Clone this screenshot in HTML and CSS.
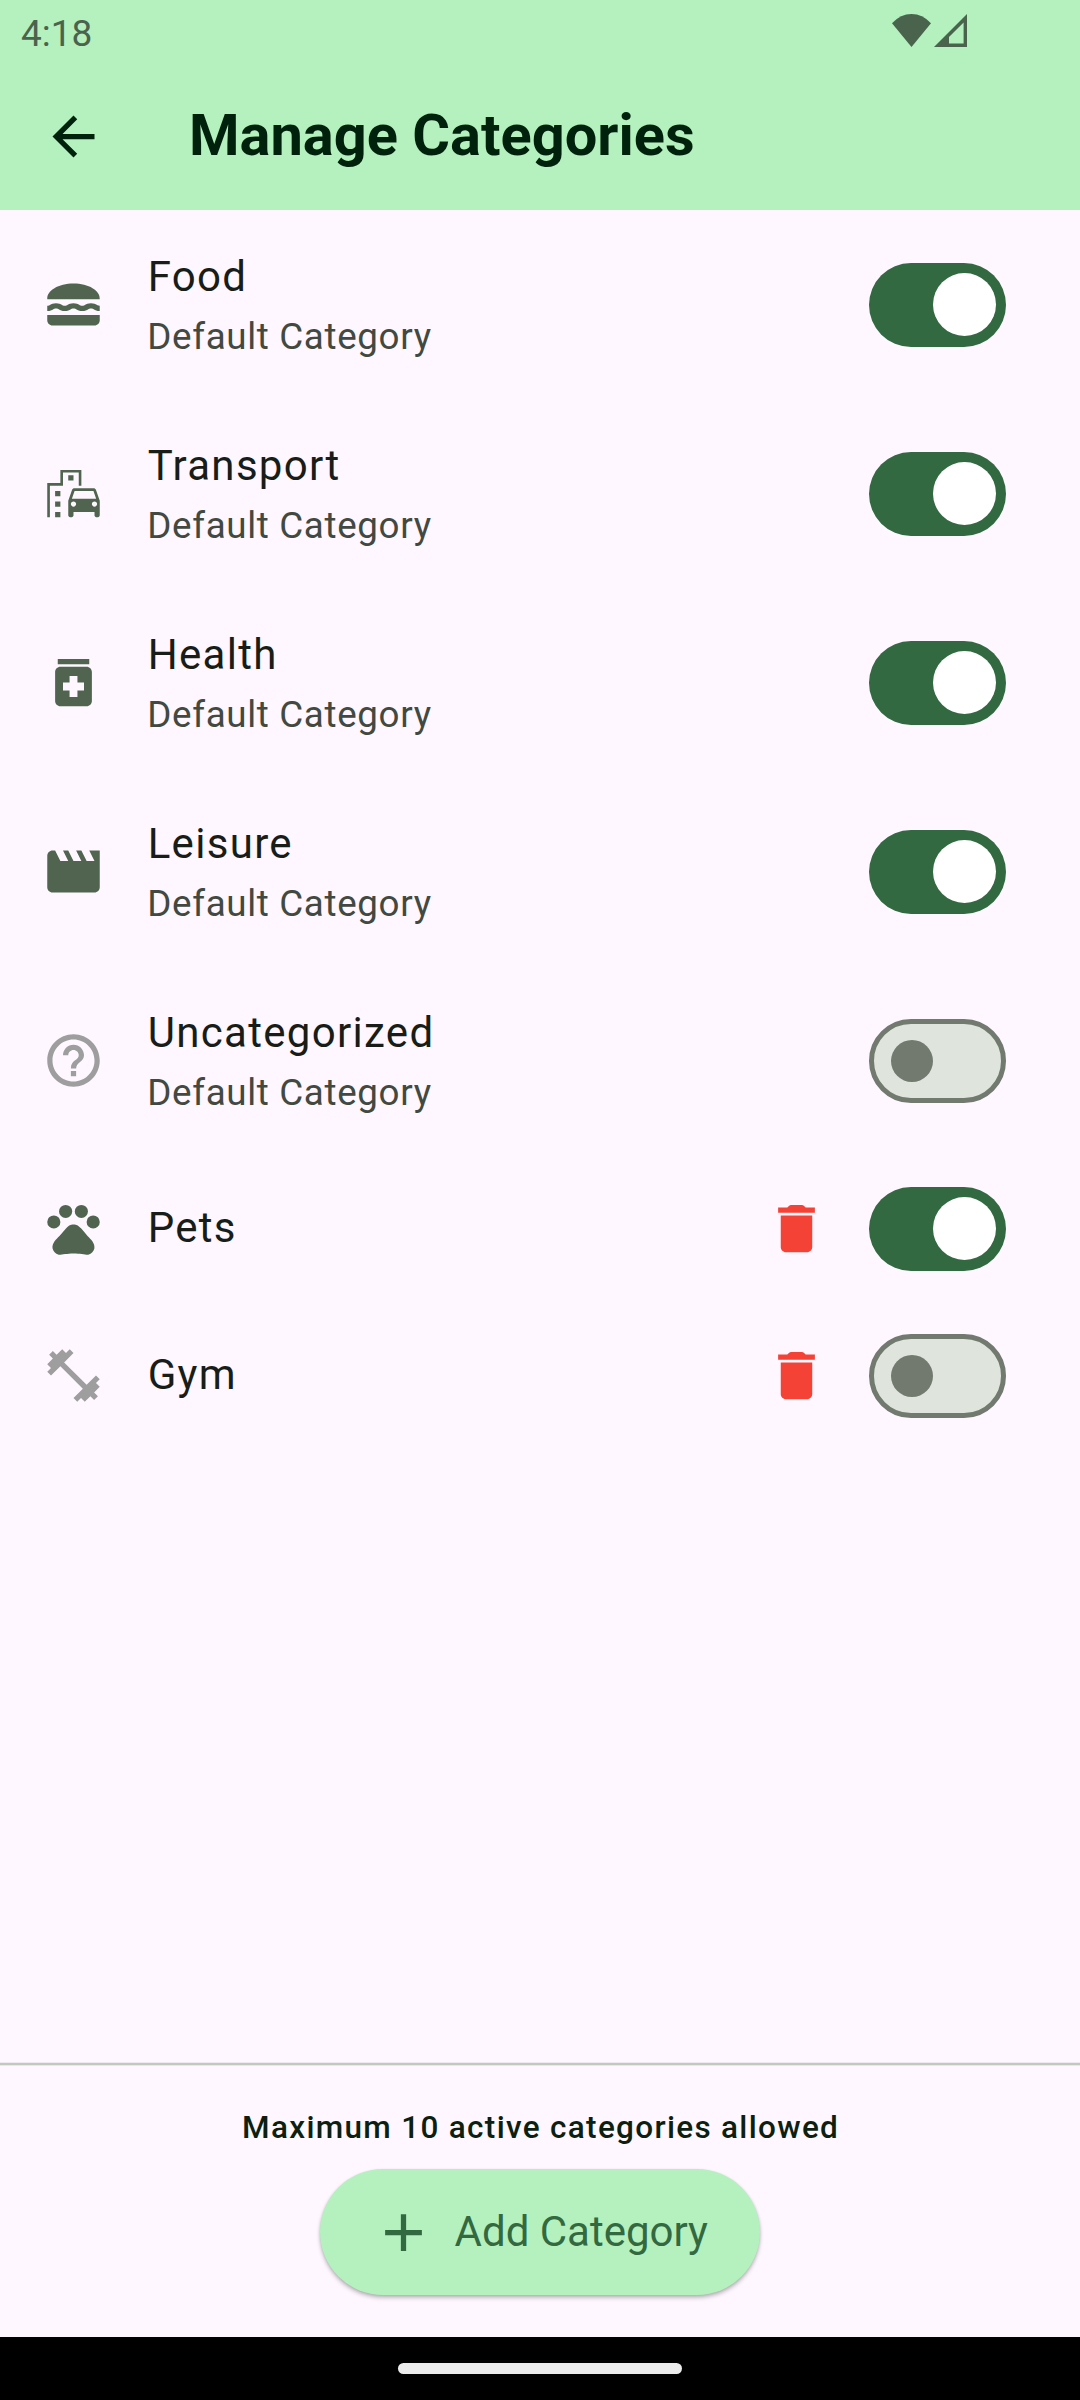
FILE: index.html
```html
<!DOCTYPE html>
<html lang="en">
<head>
<meta charset="utf-8">
<title>Manage Categories</title>
<link rel="stylesheet" href="styles.css">
</head>
<body>
<div class="screen">
  <header class="top">
    <div class="status">
      <span class="clock">4:18</span>
      <svg class="wifi" viewBox="0 0 39 33"><path d="M19.5 33L0 9.300Q8.500 0 19.500 0T39 9.300Z"/></svg>
      <svg class="signal" viewBox="0 0 33 33"><path fill-rule="evenodd" d="M33 0V33H0ZM29.600 8.500L15 23V29.600H29.600Z"/></svg>
    </div>
    <div class="appbar">
      <svg class="icon back" viewBox="0 0 24 24"><path d="M20 11H7.830l5.590-5.590L12 4l-8 8 8 8 1.410-1.410L7.830 13H20v-2z"/></svg>
      <h1 class="title">Manage Categories</h1>
    </div>
  </header>

  <main class="list">
    <div class="row">
      <svg class="icon" viewBox="0 0 24 24"><path d="M22 10c.32-3.280-4.280-6-9.990-6C6.300 4 1.700 6.720 2.020 10H22zM5.350 13.500c.55 0 .78.14 1.150.36.45.27 1.070.64 2.180.64s1.730-.37 2.180-.64c.37-.23.59-.36 1.150-.36.55 0 .78.14 1.150.36.45.27 1.070.64 2.180.64s1.730-.37 2.180-.64c.37-.23.59-.36 1.150-.36.55 0 .78.14 1.150.36.45.27 1.070.63 2.170.64v-1.980s-.79-.16-1.160-.38c-.45-.27-1.070-.64-2.180-.64s-1.730.37-2.180.64c-.37.23-.6.36-1.150.36s-.78-.14-1.150-.36c-.45-.27-1.070-.64-2.180-.64s-1.730.37-2.180.64c-.37.23-.59.36-1.150.36-.55 0-.78-.14-1.150-.36-.45-.27-1.070-.64-2.180-.64s-1.730.37-2.180.64c-.37.23-.59.36-1.150.36v2c1.110 0 1.730-.37 2.210-.64.36-.22.59-.36 1.140-.36zM2 16v2c0 1.100.9 2 2 2h16c1.100 0 2-.9 2-2v-2H2z"/></svg>
      <div class="label"><div class="name">Food</div><div class="sub">Default Category</div></div>
      <div class="switch on"><span class="thumb"></span></div>
    </div>
    <div class="row">
      <svg class="icon" viewBox="0 0 24 24"><path d="M20.570 10.660c-.14-.4-.52-.66-.97-.66h-7.190c-.46 0-.83.26-.98.66L10 14.770l.01 5.510c0 .38.31.72.69.72h.62c.38 0 .68-.38.68-.76V19h8v1.240c0 .38.31.76.69.76h.61c.38 0 .69-.34.69-.72l.01-1.370v-4.140l-1.430-4.110zm-8.160.34h7.190l1.030 3h-9.250l1.030-3zM12 17c-.55 0-1-.45-1-1s.45-1 1-1 1 .45 1 1-.45 1-1 1zm8 0c-.55 0-1-.45-1-1s.45-1 1-1 1 .45 1 1-.45 1-1 1z"/><path d="M14 9h1V3H7v5H2v13h1V9h5V4h6zM5 11h2v2H5zM10 5h2v2h-2zM5 15h2v2H5zM5 19h2v2H5z"/></svg>
      <div class="label"><div class="name">Transport</div><div class="sub">Default Category</div></div>
      <div class="switch on"><span class="thumb"></span></div>
    </div>
    <div class="row">
      <svg class="icon" viewBox="0 0 24 24"><path d="M6 3h12v2H6zM17 6H7c-1.100 0-2 .9-2 2v11c0 1.100.9 2 2 2h10c1.100 0 2-.9 2-2V8c0-1.100-.9-2-2-2zm-1 9h-2.500v2.500h-3V15H8v-3h2.500V9.500h3V12H16v3z"/></svg>
      <div class="label"><div class="name">Health</div><div class="sub">Default Category</div></div>
      <div class="switch on"><span class="thumb"></span></div>
    </div>
    <div class="row">
      <svg class="icon" viewBox="0 0 24 24"><path d="M18 4l2 4h-3l-2-4h-2l2 4h-3l-2-4H8l2 4H7L5 4H4c-1.100 0-1.990.9-1.990 2L2 18c0 1.100.9 2 2 2h16c1.100 0 2-.9 2-2V4h-4z"/></svg>
      <div class="label"><div class="name">Leisure</div><div class="sub">Default Category</div></div>
      <div class="switch on"><span class="thumb"></span></div>
    </div>
    <div class="row">
      <svg class="icon muted" viewBox="0 0 24 24"><path d="M11 18h2v-2h-2v2zm1-16C6.480 2 2 6.480 2 12s4.480 10 10 10 10-4.480 10-10S17.520 2 12 2zm0 18c-4.410 0-8-3.590-8-8s3.590-8 8-8 8 3.590 8 8-3.590 8-8 8zm0-14c-2.210 0-4 1.790-4 4h2c0-1.100.9-2 2-2s2 .9 2 2c0 2-3 1.750-3 5h2c0-2.250 3-2.500 3-5 0-2.210-1.790-4-4-4z"/></svg>
      <div class="label"><div class="name">Uncategorized</div><div class="sub">Default Category</div></div>
      <div class="switch"><span class="thumb"></span></div>
    </div>
    <div class="row short">
      <svg class="icon" viewBox="0 0 24 24"><circle cx="4.500" cy="9.500" r="2.500"/><circle cx="9" cy="5.500" r="2.500"/><circle cx="15" cy="5.500" r="2.500"/><circle cx="19.500" cy="9.500" r="2.500"/><path d="M17.340 14.860c-.87-1.020-1.600-1.890-2.480-2.910-.46-.54-1.050-1.080-1.750-1.320-.11-.04-.22-.07-.33-.09-.25-.04-.52-.04-.78-.04s-.53 0-.79.05c-.11.02-.22.05-.33.09-.7.24-1.280.78-1.750 1.320-.87 1.020-1.600 1.890-2.480 2.910-1.310 1.310-2.920 2.760-2.620 4.790.29 1.020 1.020 2.030 2.330 2.320.73.15 3.060-.44 5.540-.44h.18c2.480 0 4.810.58 5.540.44 1.310-.29 2.040-1.310 2.330-2.320.31-2.040-1.300-3.490-2.610-4.800z"/></svg>
      <div class="label"><div class="name">Pets</div></div>
      <svg class="icon delete" viewBox="0 0 24 24"><path d="M6 19c0 1.100.9 2 2 2h8c1.100 0 2-.9 2-2V7H6v12zM19 4h-3.500l-.71-.71c-.18-.18-.44-.29-.7-.29H9.910c-.26 0-.52.11-.7.29L8.500 4H5v2h14V4z"/></svg>
      <div class="switch on"><span class="thumb"></span></div>
    </div>
    <div class="row short">
      <svg class="icon muted" viewBox="0 0 24 24"><path d="M20.570 14.860L22 13.430 20.570 12 17 15.570 8.430 7 12 3.430 10.570 2 9.140 3.430 7.710 2 5.570 4.140 4.140 2.710 2.710 4.140l1.430 1.430L2 7.710l1.430 1.430L2 10.570 3.430 12 7 8.430 15.570 17 12 20.570 13.430 22l1.430-1.430L16.290 22l2.140-2.140 1.430 1.430 1.430-1.430-1.430-1.430L22 16.290z"/></svg>
      <div class="label"><div class="name">Gym</div></div>
      <svg class="icon delete" viewBox="0 0 24 24"><path d="M6 19c0 1.100.9 2 2 2h8c1.100 0 2-.9 2-2V7H6v12zM19 4h-3.500l-.71-.71c-.18-.18-.44-.29-.7-.29H9.910c-.26 0-.52.11-.7.29L8.500 4H5v2h14V4z"/></svg>
      <div class="switch"><span class="thumb"></span></div>
    </div>
  </main>

  <footer class="bottom">
    <svg class="divider" viewBox="0 0 1080 4" preserveAspectRatio="none"><rect y="0.700" width="1080" height="2.625"/></svg>
    <p class="note">Maximum 10 active categories allowed</p>
    <button class="add" type="button">
      <svg class="icon" viewBox="0 0 24 24"><path d="M19 13h-6v6h-2v-6H5v-2h6V5h2v6h6v2z"/></svg>
      <span class="add-text">Add Category</span>
    </button>
  </footer>
  <div class="navbar"><span class="handle"></span></div>
</div>
</body>
</html>
```
FILE: styles.css
```css
* {
  box-sizing: border-box;
}

body {
  margin: 0;
  font-family: Roboto, sans-serif;
  background: #fef7ff;
}

.screen {
  display: flex;
  flex-direction: column;
  width: 1080px;
  height: 2400px;
}

.icon {
  display: block;
  flex: none;
  width: 63px;
  height: 63px;
  fill: #506450;
}

.muted {
  fill: #9e9e9e;
}

.top {
  height: 210px;
  background: #b4f1be;
}

.status {
  display: flex;
  align-items: flex-start;
  height: 63px;
  padding: 0 113px 0 21px;
  fill: #4a634d;
}

.clock {
  flex: 1;
  padding-top: 12px;
  font-size: 37px;
  line-height: 43px;
  color: #4a634d;
}

.wifi {
  width: 39px;
  height: 33px;
  margin-top: 14px;
}

.signal {
  width: 33px;
  height: 33px;
  margin: 14px 0 0 3px;
}

.appbar {
  display: flex;
  align-items: center;
  gap: 84px;
  height: 147px;
  padding-left: 42px;
}

.back {
  fill: #00210b;
}

.title {
  margin: 0 0 1.5px;
  font-size: 57.75px;
  line-height: 73.5px;
  font-weight: 700;
  color: #00210b;
}

.list {
  flex: 1;
}

.row {
  display: flex;
  align-items: center;
  height: 189px;
  padding: 0 74px 0 42px;
}

.label {
  flex: 1;
  padding: 1px 0 0 42px;
}

.name {
  padding-left: 0.66px;
  font-size: 42px;
  line-height: 61px;
  letter-spacing: 1.3125px;
  color: #181d18;
}

.sub {
  margin-top: 4.25px;
  padding-left: 0.33px;
  font-size: 36.75px;
  line-height: 52.75px;
  letter-spacing: 0.656px;
  color: #424940;
}

.short {
  height: 147px;
}

.short .label {
  padding: 0 0 2px 42px;
}

.delete {
  margin-right: 41px;
  fill: #f44336;
}

.switch {
  display: flex;
  align-items: center;
  width: 137px;
  height: 84px;
  padding-left: 16.5px;
  border: 5px solid #72796f;
  border-radius: 42px;
  background: #dfe4dd;
}

.thumb {
  width: 42px;
  height: 42px;
  border-radius: 50%;
  background: #72796f;
}

.switch.on {
  justify-content: flex-end;
  padding: 0 10px 0 0;
  border: 0;
  background: #326941;
}

.on .thumb {
  width: 63.5px;
  height: 63.5px;
  background: #fff;
}

.bottom {
  display: flex;
  flex-direction: column;
  align-items: center;
  height: 275px;
}

.divider {
  display: block;
  width: 1080px;
  height: 4px;
  fill: #c1c9be;
}

.note {
  margin: 41px 0 20px;
  padding-left: 1.3px;
  font-size: 31.5px;
  line-height: 42px;
  font-weight: 500;
  letter-spacing: 1.3125px;
  color: #0c1f11;
}

.add {
  display: flex;
  align-items: center;
  gap: 19.5px;
  height: 126px;
  padding: 0 52.5px;
  border: 0;
  border-radius: 63px;
  background: #b4f1be;
  box-shadow: 0 3px 4px rgba(0, 0, 0, 0.22), 0 1px 3px rgba(0, 0, 0, 0.12);
  font-family: inherit;
  font-size: 42px;
  line-height: 63px;
  color: #326941;
}

.add-text {
  margin-bottom: 1px;
}

.add .icon {
  fill: #326941;
}

.navbar {
  display: flex;
  justify-content: center;
  align-items: center;
  height: 63px;
  background: #000;
}

.handle {
  width: 284px;
  height: 11px;
  border-radius: 5.5px;
  background: #ececec;
}
```
